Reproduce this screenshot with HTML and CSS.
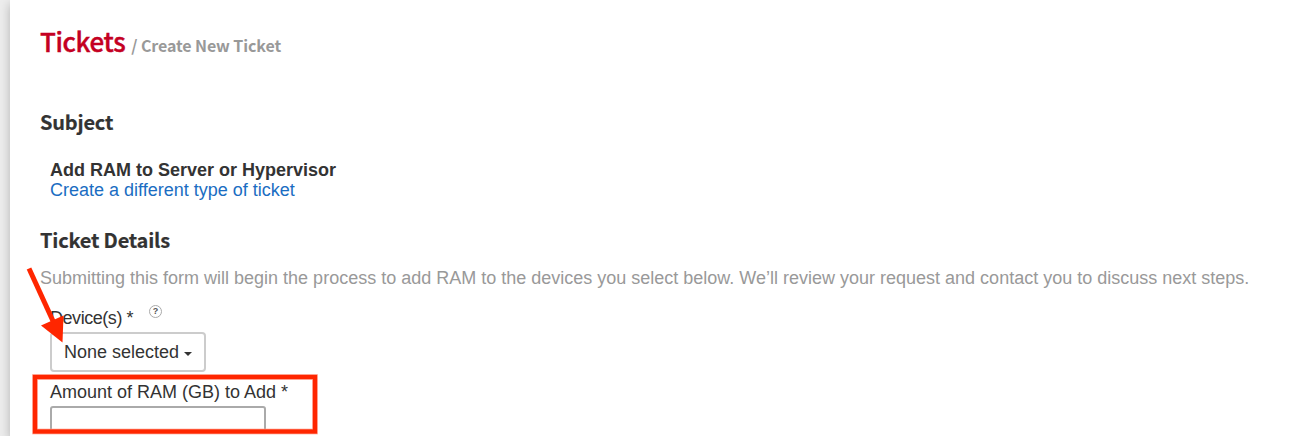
FILE: index.html
```
<!DOCTYPE html>
<html lang="en">
<head>
<meta charset="utf-8">
<title>Create New Ticket</title>
<link rel="stylesheet" href="styles.css">
</head>
<body>
<main class="panel">
  <header class="page-header">
    <h1 class="page-title">Tickets</h1>
    <span class="crumb">/ Create New Ticket</span>
  </header>
  <h2 class="section-title">Subject</h2>
  <div class="subject">
    <strong class="subject-name">Add RAM to Server or Hypervisor</strong>
    <a class="subject-link" href="#">Create a different type of ticket</a>
  </div>
  <h2 class="section-title">Ticket Details</h2>
  <p class="intro">Submitting this form will begin the process to add RAM to the devices you select below. We’ll review your request and contact you to discuss next steps.</p>
  <form class="fields">
    <div class="label-row">
      <label class="label label-devices">Device(s) *</label>
      <span class="help">?</span>
    </div>
    <button class="select" type="button"><span class="select-text">None selected</span><span class="caret"></span></button>
    <label class="label label-ram" for="ram">Amount of RAM (GB) to Add *</label>
    <input class="input" id="ram" type="text">
  </form>
</main>
<svg class="annotations" width="1308" height="436" viewBox="0 0 1308 436">
  <rect x="35" y="377" width="280" height="54.500" fill="none" stroke="#ff9d8a" stroke-width="5.600"/>
  <rect x="35" y="377" width="280" height="54.500" fill="none" stroke="#ff2600" stroke-width="4.200"/>
  <path d="M29 268.500L53 321" stroke="#ff2600" stroke-width="5" fill="none"/>
  <path d="M41 325.500L63.500 315.500L62.500 342.500Z" fill="#ff2600"/>
</svg>
</body>
</html>
```
FILE: styles.css
```
* { box-sizing: border-box; }
body {
  margin: 0;
  height: 436px;
  overflow: hidden;
  position: relative;
  padding-left: 10px;
  background: #ededed;
  color: #333;
  font: 18px/20px "Liberation Sans", Arial, sans-serif;
}
.panel {
  height: 436px;
  padding: 22px 30px 0;
  background: #fff;
  box-shadow: 0 4px 10px rgba(0, 0, 0, 0.25);
}
.page-header {
  display: flex;
  align-items: baseline;
  gap: 6px;
  height: 87px;
  white-space: nowrap;
}
.page-title, .crumb, .section-title {
  margin: 0;
  font-family: "Noto Sans CJK SC", sans-serif;
  font-weight: 700;
}
.page-title {
  color: #c40022;
  font-size: 26px;
  font-weight: 500;
  line-height: 38px;
  letter-spacing: -0.4px;
  -webkit-text-stroke: 0.4px #c40022;
}
.crumb {
  color: #999;
  font-size: 16px;
  line-height: 24px;
  letter-spacing: -0.1px;
}
.section-title {
  font-size: 20px;
  line-height: 26px;
  letter-spacing: -0.2px;
  -webkit-text-stroke: 0.2px #333;
}
.subject {
  display: flex;
  flex-direction: column;
  align-items: flex-start;
  padding: 25px 0 27px 10px;
}
.subject-link {
  color: #1a6dc2;
  text-decoration: none;
}
.intro {
  margin: 15px 0 0;
  color: #999;
  white-space: nowrap;
}
.fields {
  display: flex;
  flex-direction: column;
  align-items: flex-start;
  padding: 15px 0 0 10px;
}
.label-row {
  display: flex;
  gap: 16px;
  height: 29px;
}
.label-devices {
  padding-top: 5px;
  letter-spacing: -0.45px;
}
.help {
  width: 13px;
  height: 13px;
  margin-top: 2px;
  border: 1px solid #aaa;
  border-radius: 50%;
  color: #555;
  font-size: 9px;
  font-weight: 700;
  line-height: 11px;
  text-align: center;
}
.select {
  display: flex;
  align-items: center;
  gap: 5px;
  width: 156px;
  height: 40px;
  padding: 0 12px;
  border: 2px solid #ccc;
  border-radius: 4px;
  background: #fff;
  color: #333;
  font: inherit;
  white-space: nowrap;
}
.caret {
  margin-top: 3px;
  border: 4px solid transparent;
  border-top-color: #333;
  border-bottom: 0;
}
.label-ram { margin-top: 10px; }
.input {
  width: 216px;
  height: 26px;
  margin-top: 4px;
  border: 2px solid #aaa;
  border-radius: 3px;
  background: #fff;
}
.annotations {
  position: absolute;
  top: 0;
  left: 0;
  pointer-events: none;
}
```
